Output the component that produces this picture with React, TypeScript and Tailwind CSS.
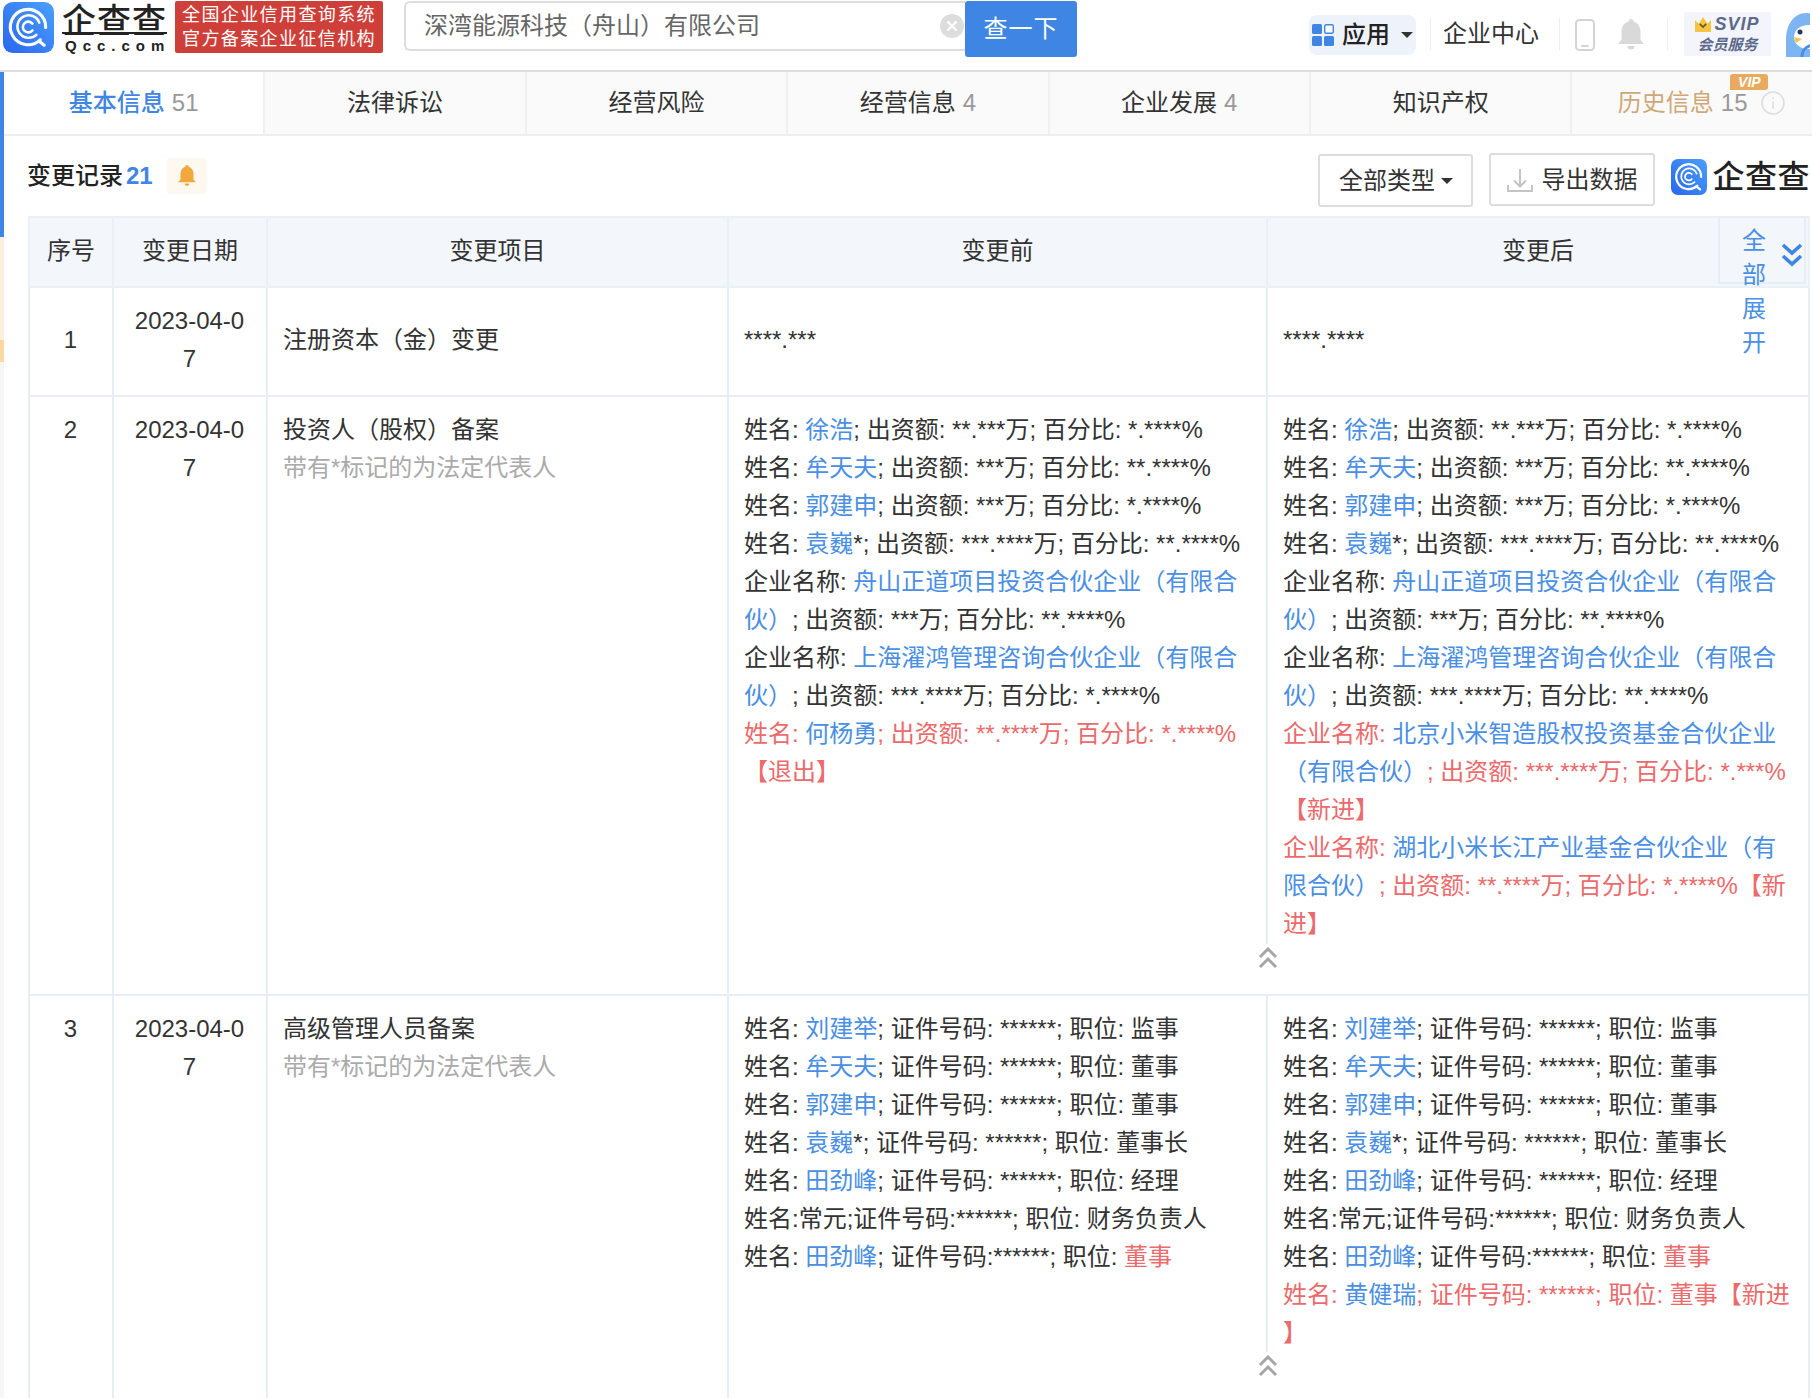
import type { ReactNode } from "react";

function QIcon({ size }: { size: number }) {
  const id = `qg${size}`;
  return (
    <svg width={size} height={size} viewBox="0 0 52 52" className="shrink-0">
      <defs>
        <linearGradient id={id} x1="0" y1="1" x2="1" y2="0">
          <stop offset="0" stopColor="#2a66ee" />
          <stop offset="1" stopColor="#4aa0fb" />
        </linearGradient>
      </defs>
      <rect width="52" height="52" rx="10" fill={`url(#${id})`} />
      <path d="M38 38.5A18 18 0 1 1 43.5 26" fill="none" stroke="#fff" strokeWidth="3.2" strokeLinecap="round" />
      <path d="M37 40l5 4" fill="none" stroke="#fff" strokeWidth="3.2" strokeLinecap="round" />
      <path d="M34 33.5A11.5 11.5 0 1 1 37 21" fill="none" stroke="#fff" strokeWidth="2.6" strokeLinecap="round" />
      <path d="M30 29a5.5 5.5 0 1 1 0-7" fill="none" stroke="#fff" strokeWidth="2.6" strokeLinecap="round" />
    </svg>
  );
}

function UpChevrons() {
  return (
    <svg width="20" height="22" viewBox="0 0 20 22" fill="none" stroke="#a6a6a6" strokeWidth="3">
      <path d="M2 10l8-8 8 8" />
      <path d="M2 20l8-8 8 8" />
    </svg>
  );
}

const L = ({ children }: { children: ReactNode }) => <span className="text-[#4a8fe4]">{children}</span>;
const R = ({ children }: { children: ReactNode }) => <span className="text-[#ec6a6c]">{children}</span>;

const investorLines = (
  <>
    <div>姓名: <L>徐浩</L>; 出资额: **.***万; 百分比: *.****%</div>
    <div>姓名: <L>牟天夫</L>; 出资额: ***万; 百分比: **.****%</div>
    <div>姓名: <L>郭建申</L>; 出资额: ***万; 百分比: *.****%</div>
    <div>姓名: <L>袁巍</L>*; 出资额: ***.****万; 百分比: **.****%</div>
    <div>企业名称: <L>舟山正道项目投资合伙企业（有限合伙）</L>; 出资额: ***万; 百分比: **.****%</div>
  </>
);

const managerLines = (
  <>
    <div>姓名: <L>刘建举</L>; 证件号码: ******; 职位: 监事</div>
    <div>姓名: <L>牟天夫</L>; 证件号码: ******; 职位: 董事</div>
    <div>姓名: <L>郭建申</L>; 证件号码: ******; 职位: 董事</div>
    <div>姓名: <L>袁巍</L>*; 证件号码: ******; 职位: 董事长</div>
    <div>姓名: <L>田劲峰</L>; 证件号码: ******; 职位: 经理</div>
    <div>姓名:常元;证件号码:******; 职位: 财务负责人</div>
    <div>姓名: <L>田劲峰</L>; 证件号码:******; 职位: <R>董事</R></div>
  </>
);

const tabs = [
  { name: "基本信息", count: "51", active: true },
  { name: "法律诉讼" },
  { name: "经营风险" },
  { name: "经营信息", count: "4" },
  { name: "企业发展", count: "4" },
  { name: "知识产权" },
];

const cell = "border-2 border-[#e6edf5] align-top pl-[15px] pr-4 py-[14px]";
const middle = "border-2 border-[#e6edf5] align-middle pl-[15px] pr-4 pt-[10px] pb-[14px]";

function Fold() {
  return (
    <div className="absolute left-[-22px] bottom-0 w-[44px] h-[50px] bg-white flex justify-center pt-[3px]">
      <UpChevrons />
    </div>
  );
}

export default function App() {
  return (
    <div className="w-[1812px] h-[1398px] overflow-hidden bg-white text-[#333] text-[24px] leading-[38px] font-['Liberation_Sans','Noto_Sans_CJK_SC',sans-serif]">
      {/* top bar */}
      <header className="flex items-start h-[72px] border-b-2 border-[#ddd]">
        <div className="ml-[3px] mt-[2px]"><QIcon size={51} /></div>
        <div className="ml-[8px] w-[107px] mt-[4px] text-[#222]">
          <div className="text-[34px] leading-[35px] font-medium tracking-[1px] whitespace-nowrap underline decoration-2 underline-offset-[-1px]">企查查</div>
          <div className="text-[15px] leading-[14px] font-bold tracking-[6px] whitespace-nowrap ml-[3px]">Qcc.com</div>
        </div>
        <div className="ml-[6px] mt-[1px] w-[208px] h-[52px] bg-[#cf3f3a] rounded-[2px] text-white text-[18px] leading-[24px] tracking-[1.4px] text-center pt-[2px] whitespace-nowrap">
          <div>全国企业信用查询系统</div>
          <div>官方备案企业征信机构</div>
        </div>
        <div className="ml-[21px] mt-[1px] w-[561px] h-[50px] border-2 border-[#ddd] border-r-0 rounded-l-[6px] flex items-center pl-[18px] text-[#666]">
          <span className="flex-1 leading-[42px]">深湾能源科技（舟山）有限公司</span>
          <svg width="24" height="24" viewBox="0 0 24 24" className="mr-[1px]">
            <circle cx="12" cy="12" r="12" fill="#ddd" />
            <path d="M7.5 7.5l9 9M16.5 7.5l-9 9" stroke="#fff" strokeWidth="2.4" />
          </svg>
        </div>
        <button className="mt-[1px] w-[112px] h-[56px] bg-[#3f86e4] text-white rounded-[3px] text-[24px] tracking-[1px]">查一下</button>
        <div className="ml-[232px] mt-[15px] w-[107px] h-[40px] rounded-[8px] bg-[#eef3fb] flex items-center pl-[3px]">
          <svg width="22" height="22" viewBox="0 0 22 22" className="shrink-0">
            <rect x="0" y="0" width="10" height="10" rx="1.5" fill="#3f86e4" />
            <rect x="12.7" y="0.7" width="8.6" height="8.6" rx="1.5" fill="#fff" stroke="#3f86e4" strokeWidth="1.4" />
            <rect x="0" y="12" width="10" height="10" rx="1.5" fill="#3f86e4" />
            <rect x="12" y="12" width="10" height="10" rx="1.5" fill="#3f86e4" />
          </svg>
          <span className="ml-[8px] font-medium text-[#222]">应用</span>
          <span className="ml-[11px] w-0 h-0 border-x-[6px] border-x-transparent border-t-[6px] border-t-[#333]" />
        </div>
        <div className="ml-[14px] mt-[18px] w-px h-[32px] bg-[#eee]" />
        <span className="ml-[12px] mt-[15px] w-[96px] whitespace-nowrap">企业中心</span>
        <div className="ml-[20px] mt-[18px] w-px h-[32px] bg-[#eee]" />
        <svg width="20" height="32" viewBox="0 0 20 32" className="ml-[15px] mt-[19px]" fill="none">
          <rect x="1" y="1" width="18" height="30" rx="3.5" stroke="#d4d4d4" strokeWidth="2" />
          <rect x="6" y="26" width="8" height="2" rx="1" fill="#d4d4d4" />
        </svg>
        <svg width="26" height="32" viewBox="0 0 26 32" className="ml-[23px] mt-[19px]" fill="#d9d9d9">
          <path d="M13 0a2.5 2.5 0 0 1 2.5 2.6C20 4 22.5 8 22.5 13v8l3.5 4H0l3.500-4v-8C3.500 8 6 4 10.500 2.600A2.500 2.500 0 0 1 13 0z" />
          <path d="M9.500 27h7a3.500 3.500 0 0 1-7 0z" />
        </svg>
        <div className="ml-[23px] mt-[18px] w-px h-[32px] bg-[#eee]" />
        <div className="ml-[16px] mt-[12px] w-[87px] h-[44px] bg-[#f3f5fb] rounded-[2px] flex flex-col items-center text-[#5d6a8c] italic font-bold">
          <div className="flex items-center h-[22px] mt-[1px]">
            <svg width="16" height="15" viewBox="0 0 15 14" className="mr-[3px]">
              <path d="M0 3l3.500 3L7.500 0l4 6L15 3v11H0z" fill="#f4c545" />
              <path d="M4.500 6.500l3 3 3-3" fill="none" stroke="#6b5a20" strokeWidth="1.600" />
            </svg>
            <span className="text-[18px] leading-[20px] tracking-[1px]">SVIP</span>
          </div>
          <span className="text-[15px] leading-[20px] whitespace-nowrap">会员服务</span>
        </div>
        <svg width="24" height="46" viewBox="0 0 24 46" className="ml-[15px] mt-[11px] shrink-0">
          <path d="M20 2c12 0 20 10 20 22v22H0V28C0 14 8 2 20 2z" fill="#7db5f2" />
          <ellipse cx="22" cy="26" rx="14" ry="12" fill="#fff" />
          <circle cx="14" cy="21" r="2.500" fill="#1f3a66" />
          <path d="M16 46c0-8 6-12 14-12" fill="none" stroke="#4a8fe4" strokeWidth="3" />
          <path d="M8 26l8 2-6 4z" fill="#f5c54a" />
        </svg>
      </header>

      <div className="flex">
        {/* left scroll strip */}
        <div className="w-1 shrink-0 h-[1326px] bg-[#f6f6f6] flex flex-col">
          <div className="h-[165px] bg-[#3f86e4]" />
          <div className="h-[103px] bg-[#fbf0dc]" />
          <div className="h-[22px] bg-[#fbd7a2]" />
        </div>

        <main className="w-[1808px] shrink-0">
          {/* tabs */}
          <nav className="flex h-[64px] border-b-2 border-[#eee]">
            {tabs.map((t) => (
              <div
                key={t.name}
                className={`w-[261.4px] shrink-0 border-r-2 border-[#f0f0f0] flex items-center justify-center whitespace-nowrap ${t.active ? "bg-white text-[#3f86e4] font-medium" : "bg-[#fafafa]"}`}
              >
                {t.name}
                {t.count && <span className="ml-[7px] text-[#999] font-normal">{t.count}</span>}
              </div>
            ))}
            <div className="relative flex-1 bg-[#fafafa] flex items-center justify-center whitespace-nowrap text-[#d0a878] pl-[18px]">
              历史信息
              <span className="ml-[7px] text-[#999]">15</span>
              <svg width="24" height="24" viewBox="0 0 24 24" fill="none" className="ml-[13px]">
                <circle cx="12" cy="12" r="11" stroke="#ddd" strokeWidth="1.600" />
                <path d="M12 10.500v7M12 6.500v1.500" stroke="#ddd" strokeWidth="1.600" />
              </svg>
              <span className="absolute left-[158px] top-[2px] h-[16px] w-[38px] rounded-[3px] rounded-bl-none bg-[#e9a95e] text-white text-[14px] leading-[16px] italic font-bold text-center">VIP</span>
            </div>
          </nav>

          {/* section heading */}
          <div className="flex items-start h-[80px] pl-[23px] pr-[2px]">
            <div className="flex items-center mt-[21px]">
              <span className="font-medium text-[#222]">变更记录</span>
              <span className="ml-[3px] font-bold text-[#3f86e4]">21</span>
              <span className="ml-[14px] w-[40px] h-[36px] bg-[#fdf8f0] rounded-[3px] flex items-center justify-center">
                <svg width="18" height="22" viewBox="0 0 26 32" fill="#f0a93a">
                  <path d="M13 0a2.500 2.500 0 0 1 2.500 2.600C20 4 22.500 8 22.500 13v8l3.500 4H0l3.500-4v-8C3.500 8 6 4 10.500 2.600A2.500 2.500 0 0 1 13 0z" />
                  <path d="M9.500 27h7a3.500 3.500 0 0 1-7 0z" />
                </svg>
              </span>
            </div>
            <button className="ml-auto mt-[18px] w-[155px] h-[53px] border-2 border-[#ddd] rounded-[3px] flex items-center justify-center">
              全部类型
              <span className="ml-[6px] w-0 h-0 border-x-[6px] border-x-transparent border-t-[6px] border-t-[#333]" />
            </button>
            <button className="ml-[16px] mt-[17px] w-[166px] h-[53px] border-2 border-[#ddd] rounded-[3px] flex items-center justify-center">
              <svg width="26" height="26" viewBox="0 0 26 26" fill="none" stroke="#c4c4c4" strokeWidth="2" className="mr-[8px]">
                <path d="M13 2v17M7 13.500l6 6 6-6M1 18v6h24v-6" />
              </svg>
              导出数据
            </button>
            <div className="ml-[16px] mt-[23px] flex items-center">
              <QIcon size={36} />
              <span className="ml-[5px] text-[32px] leading-[36px] font-medium tracking-[0.5px] text-[#222] whitespace-nowrap">企查查</span>
            </div>
          </div>

          {/* change records table */}
          <div className="relative ml-[24px] w-[1780px]">
            <table className="w-full table-fixed border-collapse">
              <colgroup>
                <col className="w-[84px]" />
                <col className="w-[154px]" />
                <col className="w-[461px]" />
                <col className="w-[539px]" />
                <col className="w-[542px]" />
              </colgroup>
              <thead>
                <tr className="h-[70px] bg-[#f3f7fb]">
                  {["序号", "变更日期", "变更项目", "变更前", "变更后"].map((h) => (
                    <th key={h} className="border-2 border-[#e9f0f6] font-normal pb-[2px]">{h}</th>
                  ))}
                </tr>
              </thead>
              <tbody>
                <tr className="h-[109px]">
                  <td className={`${middle} text-center`}>1</td>
                  <td className={`${middle} text-center break-all`}>2023-04-07</td>
                  <td className={middle}>注册资本（金）变更</td>
                  <td className={middle}>****.***</td>
                  <td className={middle}>****.****</td>
                </tr>
                <tr className="h-[599px]">
                  <td className={`${cell} text-center`}>2</td>
                  <td className={`${cell} text-center break-all`}>2023-04-07</td>
                  <td className={cell}>
                    <div>投资人（股权）备案</div>
                    <div className="text-[#aaa]">带有*标记的为法定代表人</div>
                  </td>
                  <td className={cell}>
                    {investorLines}
                    <div>企业名称: <L>上海濯鸿管理咨询合伙企业（有限合伙）</L>; 出资额: ***.****万; 百分比: *.****%</div>
                    <div><R>姓名: </R><L>何杨勇</L><R>; 出资额: **.****万; 百分比: *.****%【退出】</R></div>
                  </td>
                  <td className={`${cell} relative`}>
                    {investorLines}
                    <div>企业名称: <L>上海濯鸿管理咨询合伙企业（有限合伙）</L>; 出资额: ***.****万; 百分比: **.****%</div>
                    <div><R>企业名称: </R><L>北京小米智造股权投资基金合伙企业（有限合伙）</L><R>; 出资额: ***.****万; 百分比: *.***%【新进】</R></div>
                    <div><R>企业名称: </R><L>湖北小米长江产业基金合伙企业（有限合伙）</L><R>; 出资额: **.****万; 百分比: *.****%【新进】</R></div>
                    <Fold />
                  </td>
                </tr>
                <tr className="h-[408px]">
                  <td className={`${cell} text-center`}>3</td>
                  <td className={`${cell} text-center break-all`}>2023-04-07</td>
                  <td className={cell}>
                    <div>高级管理人员备案</div>
                    <div className="text-[#aaa]">带有*标记的为法定代表人</div>
                  </td>
                  <td className={cell}>{managerLines}</td>
                  <td className={`${cell} relative`}>
                    {managerLines}
                    <div className="whitespace-nowrap"><R>姓名: </R><L>黄健瑞</L><R>; 证件号码: ******; 职位: 董事【新进<br />】</R></div>
                    <Fold />
                  </td>
                </tr>
              </tbody>
            </table>

            {/* expand-all overlay */}
            <div className="absolute top-0 right-[2px] w-[88px] h-[68px] border-2 border-[#e6edf5] pl-[22px] pt-[6px] leading-[34px] text-[#4a8fe4]">
              <div className="w-[24px]">全部展开</div>
              <svg width="22" height="26" viewBox="0 0 22 26" fill="none" stroke="#3f86e4" strokeWidth="3.600" className="absolute right-[1px] top-[24px]">
                <path d="M2 3l9 8 9-8" />
                <path d="M2 14l9 8 9-8" />
              </svg>
            </div>
          </div>
        </main>
      </div>
    </div>
  );
}
